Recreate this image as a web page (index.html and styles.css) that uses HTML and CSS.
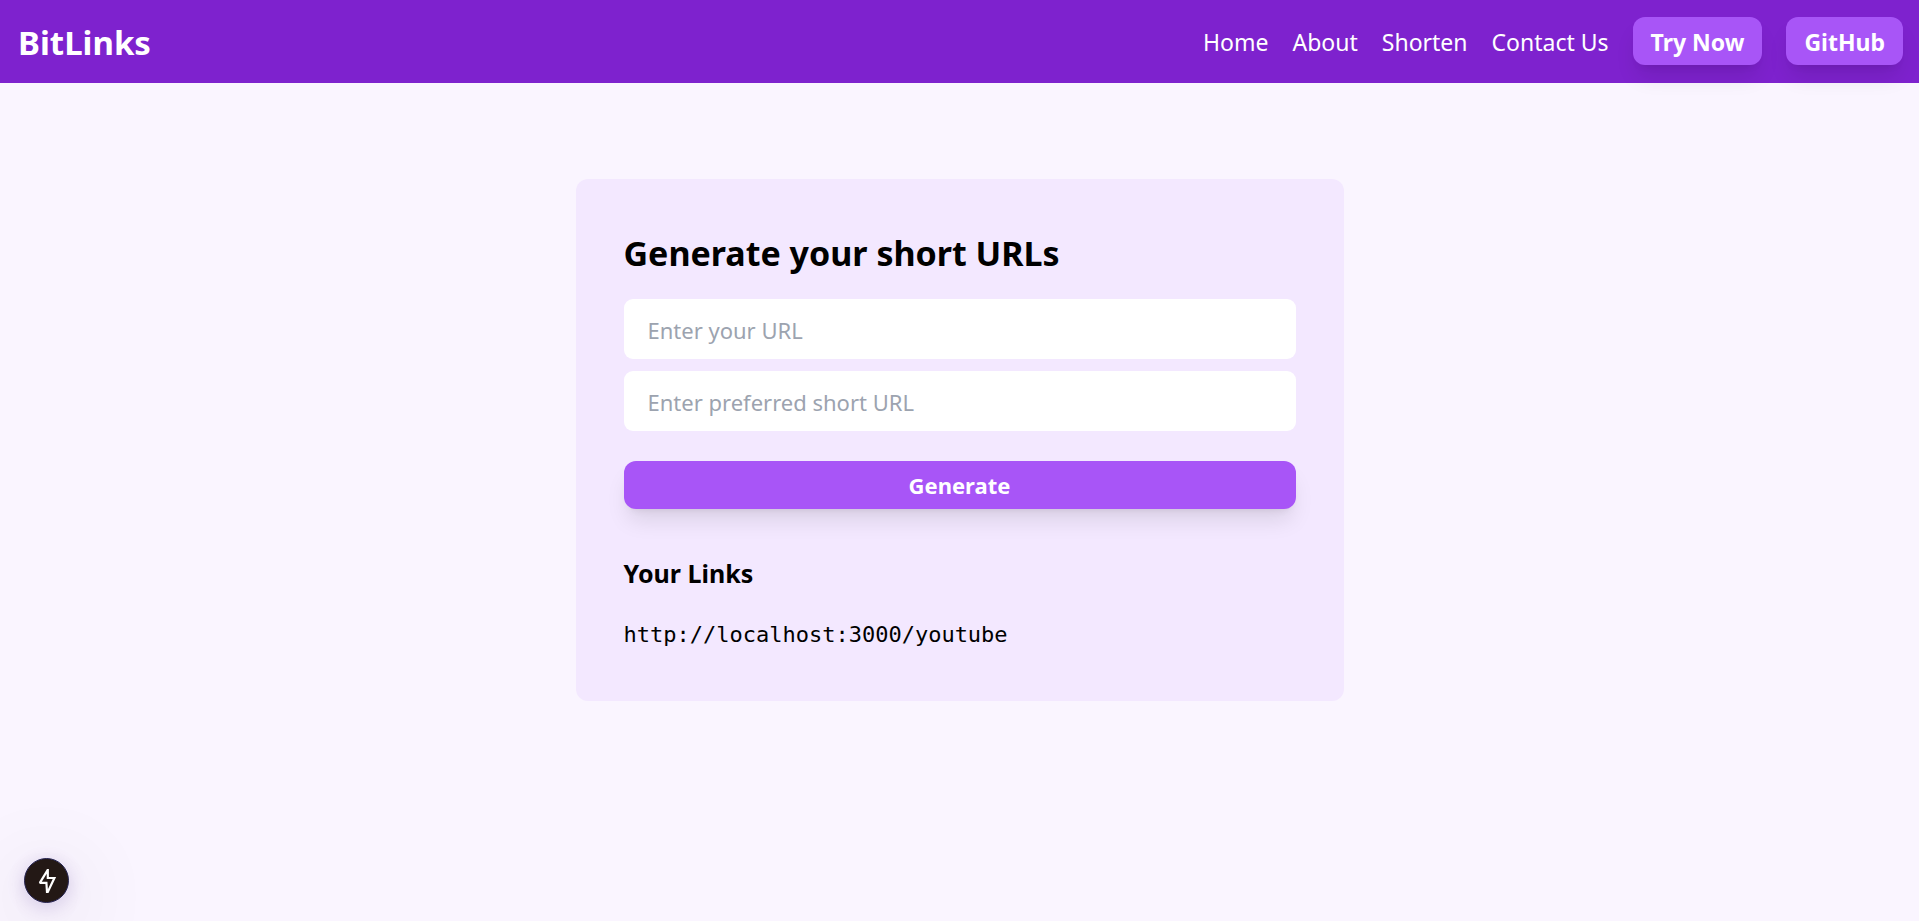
FILE: index.html
```html
<!DOCTYPE html>
<html lang="en">
<head>
<meta charset="utf-8">
<meta name="viewport" content="width=device-width, initial-scale=1">
<title>BitLinks</title>
<link rel="stylesheet" href="styles.css">
</head>
<body>
<header class="navbar">
  <a class="brand" href="#">BitLinks</a>
  <nav class="nav-links" aria-label="Main">
    <a href="#">Home</a>
    <a href="#">About</a>
    <a href="#">Shorten</a>
    <a href="#">Contact Us</a>
    <button class="btn" type="button">Try Now</button>
    <button class="btn" type="button">GitHub</button>
  </nav>
</header>
<main class="card">
  <h1 class="card-title">Generate your short URLs</h1>
  <form class="form">
    <input class="field" type="text" placeholder="Enter your URL" aria-label="URL">
    <input class="field" type="text" placeholder="Enter preferred short URL" aria-label="Preferred short URL">
    <button class="btn btn-submit" type="button">Generate</button>
  </form>
  <h2 class="links-title">Your Links</h2>
  <a class="short-link" href="#">http://localhost:3000/youtube</a>
</main>
<button class="indicator" type="button" aria-label="Static route">
  <svg class="bolt" viewBox="0 0 24 30" fill="none" aria-hidden="true">
    <path d="M12.6 4.2 L4.8 16.8 H11.4 L12 26 H12.8 L19.4 12 H12.8 V4.2 Z" stroke="#fff" stroke-width="2.2" stroke-linejoin="miter" stroke-miterlimit="2"/>
  </svg>
</button>
</body>
</html>
```
FILE: styles.css
```css
*,
*::before,
*::after {
  box-sizing: border-box;
}

body {
  margin: 0;
  min-height: 100vh;
  background: #faf5ff;
  color: #000;
  font: 22px/36px "Segoe UI", "Noto Sans", sans-serif;
}

a {
  color: inherit;
  text-decoration: none;
}

.navbar {
  display: flex;
  align-items: center;
  justify-content: space-between;
  padding: 17px 16px 18px 18px;
  background: #7e22ce;
  color: #fff;
}

.brand {
  padding-top: 3px;
  font-size: 33px;
  font-weight: 700;
}

.nav-links {
  display: flex;
  align-items: center;
  gap: 24px;
  font-size: 23px;
}

.btn {
  padding: 6px 18px;
  border: 0;
  border-radius: 12px;
  background: #a855f7;
  color: #fff;
  font: inherit;
  font-weight: 700;
  cursor: pointer;
  box-shadow: 0 15px 22px -4px rgba(0, 0, 0, 0.1), 0 6px 9px -6px rgba(0, 0, 0, 0.1);
}

.nav-links .btn {
  padding: 7px 18px 5px;
}

.nav-links a {
  padding-top: 2px;
}

.card {
  max-width: 768px;
  margin: 96px auto;
  padding: 50px 48px 48px;
  border-radius: 12px;
  background: #f3e8ff;
}

.card-title {
  margin: 0 0 22px;
  font-size: 34px;
  line-height: 48px;
  font-weight: 700;
}

.form {
  display: flex;
  flex-direction: column;
  gap: 12px;
}

.field {
  width: 100%;
  height: 60px;
  padding: 13px 24px 11px;
  border: 0;
  border-radius: 9px;
  background: #fff;
  color: #000;
  font: inherit;
}

.field::placeholder {
  color: #9ca3af;
  opacity: 1;
}

.btn-submit {
  margin-top: 18px;
}

.links-title {
  margin: 43px 0 23px;
  font-size: 25px;
  line-height: 42px;
  font-weight: 700;
}

.short-link {
  display: block;
  font-family: Consolas, "DejaVu Sans Mono", monospace;
}

.indicator {
  position: fixed;
  left: 24px;
  bottom: 18px;
  display: grid;
  place-items: center;
  width: 45px;
  height: 45px;
  padding: 0;
  border: 1px solid #262452;
  border-radius: 50%;
  background: #231815;
  box-shadow: 0 4px 20px rgba(88, 50, 150, 0.22), 0 16px 90px rgba(0, 0, 0, 0.2);
  cursor: pointer;
}

.bolt {
  width: 24px;
  height: 30px;
}
```
